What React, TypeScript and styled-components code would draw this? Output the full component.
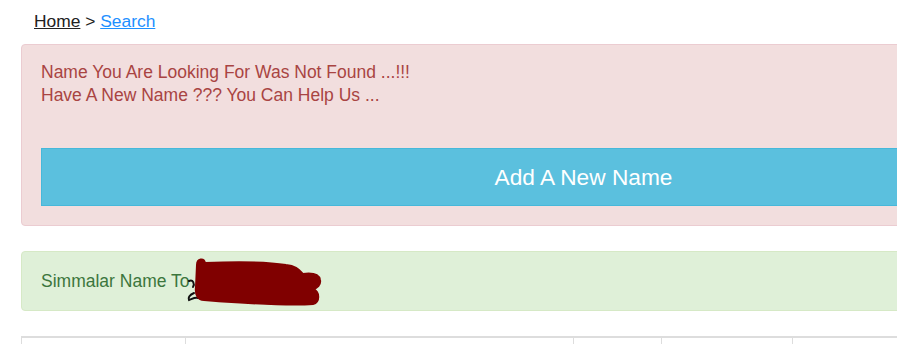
import React from "react";
import styled, { createGlobalStyle } from "styled-components";

const GlobalStyle = createGlobalStyle`
  html, body {
    margin: 0;
    padding: 0;
    overflow: hidden;
    background: #fff;
  }
  body {
    font-family: "Liberation Sans", Arial, sans-serif;
    font-size: 17.5px;
    line-height: 1.42857;
    color: #333;
  }
`;

const Page = styled.div`
  width: 1125px;
  padding: 9px 0 0 21px;
`;

const Breadcrumb = styled.div`
  padding-left: 13px;
  font-size: 17.4px;
  line-height: 24px;
  color: #222;
  margin-bottom: 11px;
`;

const Crumb = styled.a<{ $active?: boolean }>`
  color: ${(p) => (p.$active ? "#1e90ff" : "#222")};
  text-decoration: underline;
  cursor: pointer;
`;

const Alert = styled.div<{ $tone: "danger" | "success" }>`
  position: relative;
  border: 1px solid
    ${(p) => (p.$tone === "danger" ? "#ebccd1" : "#d6e9c6")};
  background: ${(p) => (p.$tone === "danger" ? "#f2dede" : "#dff0d8")};
  color: ${(p) => (p.$tone === "danger" ? "#a94442" : "#3c763d")};
  border-radius: 4px;
  padding: 15px 19px;
  margin-bottom: 25px;
  font-size: 17.5px;
  line-height: 23px;
`;

const Message = styled.p`
  margin: 1px 0 41px;
`;

const AddButton = styled.button`
  display: block;
  width: 100%;
  height: 58px;
  margin-bottom: 4px;
  border: 1px solid #46b8da;
  background: #5bc0de;
  color: #fff;
  font-family: "Liberation Sans", Arial, sans-serif;
  font-size: 22.7px;
  cursor: pointer;
`;

const SimilarLine = styled.div`
  height: 28px;
  display: flex;
  align-items: center;
`;

const Redaction = styled.svg`
  position: absolute;
  left: 164px;
  top: 5px;
`;

const Table = styled.table`
  border-collapse: collapse;
  table-layout: fixed;
  width: 1104px;
  margin-top: 1px;
`;

const Cell = styled.th<{ $w: number }>`
  width: ${(p) => p.$w}px;
  height: 20px;
  border: 1px solid #ddd;
  border-top-width: 2px;
  padding: 0;
`;

const columns = [163, 387, 87, 130, 333];

export default function App() {
  return (
    <>
      <GlobalStyle />
      <Page>
        <Breadcrumb>
          <Crumb>Home</Crumb> &gt; <Crumb $active>Search</Crumb>
        </Breadcrumb>

        <Alert $tone="danger">
          <Message>
            Name You Are Looking For Was Not Found ...!!!
            <br />
            Have A New Name ??? You Can Help Us ...
          </Message>
          <AddButton>Add A New Name</AddButton>
        </Alert>

        <Alert $tone="success">
          <SimilarLine>Simmalar Name To</SimilarLine>
          <Redaction width="140" height="52" viewBox="0 0 140 52">
            <path
              d="M3 24 C7 22 9 27 7 30 M8 36 C3 38 2 41 3 43 C6 42 9 40 12 41"
              fill="none"
              stroke="#111"
              strokeWidth="2"
              strokeLinecap="round"
            />
            <path
              d="M11 8 C11 1 18 1 19 6 C45 5 75 4 100 8 C110 9 113 13 117 17 C125 16 133 17 134 23 C135 28 131 31 127 32 C134 35 134 45 127 47 C100 49 60 46 30 44 L18 43 C12 43 9 38 10 30 Z"
              fill="#800000"
              stroke="#800000"
              strokeWidth="2"
              strokeLinejoin="round"
            />
          </Redaction>
        </Alert>

        <Table>
          <thead>
            <tr>
              {columns.map((w, i) => (
                <Cell key={i} $w={w} />
              ))}
            </tr>
          </thead>
        </Table>
      </Page>
    </>
  );
}
